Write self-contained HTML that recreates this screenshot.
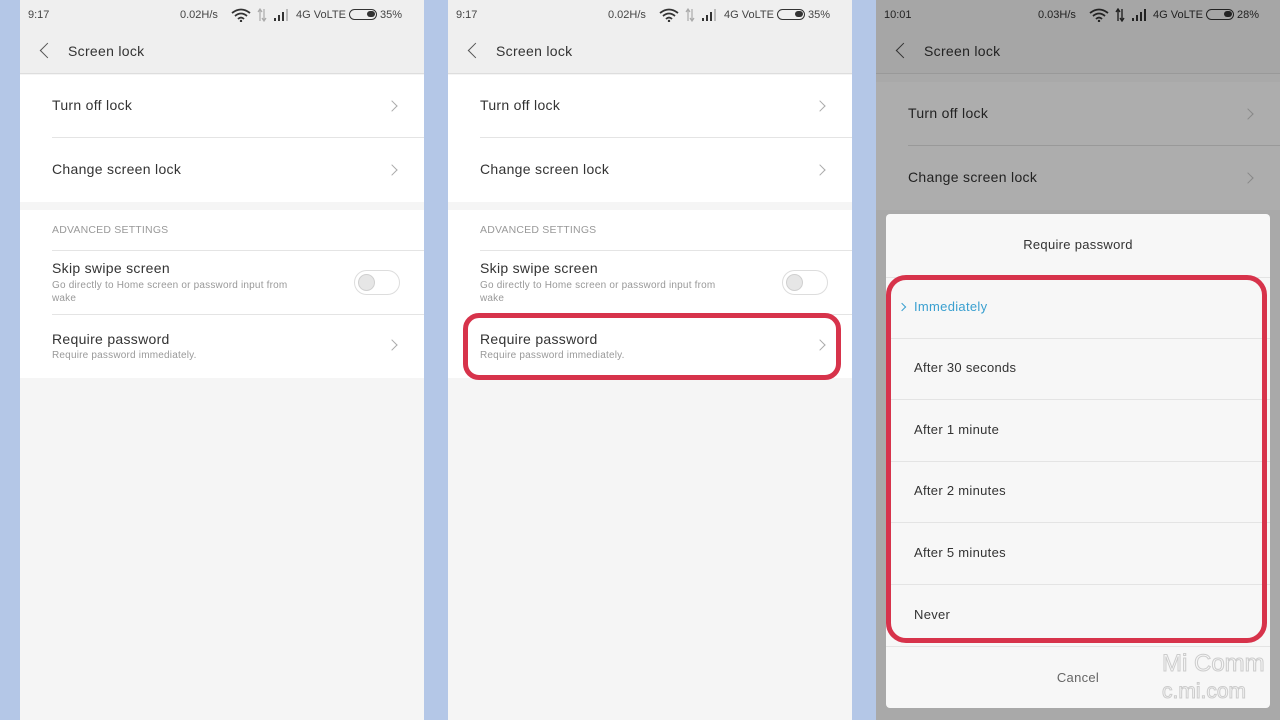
<!DOCTYPE html>
<html><head><meta charset="utf-8"><style>
*{margin:0;padding:0;box-sizing:border-box}
body{width:1280px;height:720px;background:#b4c7e7;position:relative;overflow:hidden;font-family:"Liberation Sans",sans-serif;color:#333}
.p{position:absolute;top:0;width:404px;height:720px;background:#f5f5f5;overflow:hidden}
.a{position:absolute}
.sb{top:0;left:0;right:0;height:30px;background:#efefef;font-size:11px;color:#444}
.hd{top:30px;left:0;right:0;height:44px;background:#efefef;border-bottom:1px solid #ddd}
.t{font-size:14px;color:#333;white-space:nowrap;letter-spacing:0.3px}
.s{font-size:10px;color:#999;white-space:nowrap;letter-spacing:0.2px}
.chev{width:8px;height:8px;border-top:1.3px solid #aaa;border-right:1.3px solid #aaa;transform:rotate(45deg)}
.div{height:1px;background:#e4e4e4}
.red{border:5px solid #d7334b;border-radius:16px}
.ic{position:absolute;top:8px}
</style></head><body>

<div class="p" style="left:20px">
 <div class="a sb"><span class="a" style="left:8px;top:9px">9:17</span><span class="a" style="left:160px;top:9px">0.02H/s</span>
  <svg class="ic" style="left:211px" width="20" height="14" viewBox="0 0 20 14"><path d="M1 5Q10-2 19 5M4 8Q10 3 16 8M7 11Q10 8 13 11" stroke="#333" stroke-width="1.8" fill="none"/><circle cx="10" cy="13" r="1.2" fill="#333"/></svg>
  <svg class="ic" style="left:236px" width="12" height="14" viewBox="0 0 12 14"><path d="M4 1v12M8 1v12M2 4l2-3 2 3M6 10l2 3 2-3" stroke="#aaa" stroke-width="1.2" fill="none"/></svg>
  <svg class="ic" style="left:253px" width="18" height="14" viewBox="0 0 18 14"><rect x="1" y="10" width="2" height="3" fill="#333"/><rect x="5" y="7" width="2" height="6" fill="#333"/><rect x="9" y="4" width="2" height="9" fill="#333"/><rect x="13" y="1" width="2" height="12" fill="#bbb"/></svg>
  <span class="a" style="left:276px;top:9px">4G VoLTE <span style="display:inline-block;width:28px;height:11px;border:1.5px solid #333;border-radius:6px;vertical-align:-2px;position:relative"><span style="position:absolute;right:1px;top:1px;width:8px;height:6px;background:#333;border-radius:3px"></span></span> 35%</span></div>
 <div class="a hd"><div class="a" style="left:22px;top:15px;width:11px;height:11px;border-left:1.5px solid #555;border-bottom:1.5px solid #555;transform:rotate(45deg)"></div><span class="a t" style="left:48px;top:13px">Screen lock</span></div>
 <div class="a" style="left:0;right:0;top:75px;height:127px;background:#fff"></div>
 <span class="a t" style="left:32px;top:97px">Turn off lock</span><div class="a chev" style="left:368px;top:102px"></div>
 <div class="a div" style="left:32px;right:0;top:137px"></div>
 <span class="a t" style="left:32px;top:161px">Change screen lock</span><div class="a chev" style="left:368px;top:166px"></div>
 <div class="a" style="left:0;right:0;top:210px;height:168px;background:#fff"></div>
 <span class="a s" style="left:32px;top:224px;font-size:10.5px">ADVANCED SETTINGS</span>
 <div class="a div" style="left:32px;right:0;top:250px"></div>
 <span class="a t" style="left:32px;top:260px">Skip swipe screen</span>
 <span class="a s" style="left:32px;top:279px;line-height:13px">Go directly to Home screen or password input from<br>wake</span>
 <div class="a" style="left:334px;top:270px;width:46px;height:25px;border:1px solid #ddd;border-radius:13px"><div class="a" style="left:3px;top:3px;width:17px;height:17px;border-radius:50%;background:#e6e6e6;border:1px solid #d0d0d0"></div></div>
 <div class="a div" style="left:32px;right:0;top:314px"></div>
 <span class="a t" style="left:32px;top:331px">Require password</span>
 <span class="a s" style="left:32px;top:350px">Require password immediately.</span><div class="a chev" style="left:368px;top:341px"></div>
</div>

<div class="p" style="left:448px">
 <div class="a sb"><span class="a" style="left:8px;top:9px">9:17</span><span class="a" style="left:160px;top:9px">0.02H/s</span>
  <svg class="ic" style="left:211px" width="20" height="14" viewBox="0 0 20 14"><path d="M1 5Q10-2 19 5M4 8Q10 3 16 8M7 11Q10 8 13 11" stroke="#333" stroke-width="1.8" fill="none"/><circle cx="10" cy="13" r="1.2" fill="#333"/></svg>
  <svg class="ic" style="left:236px" width="12" height="14" viewBox="0 0 12 14"><path d="M4 1v12M8 1v12M2 4l2-3 2 3M6 10l2 3 2-3" stroke="#aaa" stroke-width="1.2" fill="none"/></svg>
  <svg class="ic" style="left:253px" width="18" height="14" viewBox="0 0 18 14"><rect x="1" y="10" width="2" height="3" fill="#333"/><rect x="5" y="7" width="2" height="6" fill="#333"/><rect x="9" y="4" width="2" height="9" fill="#333"/><rect x="13" y="1" width="2" height="12" fill="#bbb"/></svg>
  <span class="a" style="left:276px;top:9px">4G VoLTE <span style="display:inline-block;width:28px;height:11px;border:1.5px solid #333;border-radius:6px;vertical-align:-2px;position:relative"><span style="position:absolute;right:1px;top:1px;width:8px;height:6px;background:#333;border-radius:3px"></span></span> 35%</span></div>
 <div class="a hd"><div class="a" style="left:22px;top:15px;width:11px;height:11px;border-left:1.5px solid #555;border-bottom:1.5px solid #555;transform:rotate(45deg)"></div><span class="a t" style="left:48px;top:13px">Screen lock</span></div>
 <div class="a" style="left:0;right:0;top:75px;height:127px;background:#fff"></div>
 <span class="a t" style="left:32px;top:97px">Turn off lock</span><div class="a chev" style="left:368px;top:102px"></div>
 <div class="a div" style="left:32px;right:0;top:137px"></div>
 <span class="a t" style="left:32px;top:161px">Change screen lock</span><div class="a chev" style="left:368px;top:166px"></div>
 <div class="a" style="left:0;right:0;top:210px;height:168px;background:#fff"></div>
 <span class="a s" style="left:32px;top:224px;font-size:10.5px">ADVANCED SETTINGS</span>
 <div class="a div" style="left:32px;right:0;top:250px"></div>
 <span class="a t" style="left:32px;top:260px">Skip swipe screen</span>
 <span class="a s" style="left:32px;top:279px;line-height:13px">Go directly to Home screen or password input from<br>wake</span>
 <div class="a" style="left:334px;top:270px;width:46px;height:25px;border:1px solid #ddd;border-radius:13px"><div class="a" style="left:3px;top:3px;width:17px;height:17px;border-radius:50%;background:#e6e6e6;border:1px solid #d0d0d0"></div></div>
 <div class="a div" style="left:32px;right:0;top:314px"></div>
 <span class="a t" style="left:32px;top:331px">Require password</span>
 <span class="a s" style="left:32px;top:350px">Require password immediately.</span><div class="a chev" style="left:368px;top:341px"></div>
 <div class="a red" style="left:15px;top:313px;width:378px;height:67px"></div>
</div>

<div class="p" style="left:876px;background:#a9a9a9">
 <div class="a sb" style="background:#a6a6a6;color:#222"><span class="a" style="left:8px;top:9px">10:01</span><span class="a" style="left:162px;top:9px">0.03H/s</span>
  <svg class="ic" style="left:213px" width="20" height="14" viewBox="0 0 20 14"><path d="M1 5Q10-2 19 5M4 8Q10 3 16 8M7 11Q10 8 13 11" stroke="#222" stroke-width="1.8" fill="none"/><circle cx="10" cy="13" r="1.2" fill="#222"/></svg>
  <svg class="ic" style="left:238px" width="12" height="14" viewBox="0 0 12 14"><path d="M4 1v12M8 1v12M2 4l2-3 2 3M6 10l2 3 2-3" stroke="#222" stroke-width="1.4" fill="none"/></svg>
  <svg class="ic" style="left:255px" width="18" height="14" viewBox="0 0 18 14"><rect x="1" y="10" width="2" height="3" fill="#222"/><rect x="5" y="7" width="2" height="6" fill="#222"/><rect x="9" y="4" width="2" height="9" fill="#222"/><rect x="13" y="1" width="2" height="12" fill="#222"/></svg>
  <span class="a" style="left:277px;top:9px">4G VoLTE <span style="display:inline-block;width:28px;height:11px;border:1.5px solid #222;border-radius:6px;vertical-align:-2px;position:relative"><span style="position:absolute;right:1px;top:1px;width:8px;height:6px;background:#222;border-radius:3px"></span></span> 28%</span></div>
 <div class="a hd" style="background:#a6a6a6;border-color:#999"><div class="a" style="left:22px;top:15px;width:11px;height:11px;border-left:1.5px solid #333;border-bottom:1.5px solid #333;transform:rotate(45deg)"></div><span class="a t" style="left:48px;top:13px;color:#222">Screen lock</span></div>
 <div class="a" style="left:0;right:0;top:82px;height:128px;background:#adadad"></div>
 <span class="a t" style="left:32px;top:105px;color:#222">Turn off lock</span><div class="a chev" style="left:368px;top:110px;border-color:#888"></div>
 <div class="a div" style="left:32px;right:0;top:145px;background:#999"></div>
 <span class="a t" style="left:32px;top:169px;color:#222">Change screen lock</span><div class="a chev" style="left:368px;top:174px;border-color:#888"></div>
 <div class="a" style="left:10px;top:214px;width:384px;height:494px;background:#f7f7f7;border-radius:4px">
  <span class="a t" style="left:0;right:0;top:23px;text-align:center;font-size:13px">Require password</span>
  <div class="a div" style="left:0;right:0;top:63px"></div>
  <div class="a" style="left:13px;top:90px;width:6px;height:6px;border-top:1.5px solid #3aa0d0;border-right:1.5px solid #3aa0d0;transform:rotate(45deg)"></div>
  <span class="a t" style="left:28px;top:85px;color:#3aa0d0;font-size:13px">Immediately</span>
  <div class="a div" style="left:0;right:0;top:124px"></div>
  <span class="a t" style="left:28px;top:146px;font-size:13px">After 30 seconds</span>
  <div class="a div" style="left:0;right:0;top:185px"></div>
  <span class="a t" style="left:28px;top:208px;font-size:13px">After 1 minute</span>
  <div class="a div" style="left:0;right:0;top:247px"></div>
  <span class="a t" style="left:28px;top:269px;font-size:13px">After 2 minutes</span>
  <div class="a div" style="left:0;right:0;top:308px"></div>
  <span class="a t" style="left:28px;top:331px;font-size:13px">After 5 minutes</span>
  <div class="a div" style="left:0;right:0;top:370px"></div>
  <span class="a t" style="left:28px;top:393px;font-size:13px">Never</span>
  <div class="a div" style="left:0;right:0;top:432px"></div>
  <span class="a t" style="left:0;right:0;top:456px;text-align:center;font-size:13px;color:#666">Cancel</span>
  <span class="a" style="left:276px;top:436px;font-size:24px;color:transparent;-webkit-text-stroke:1px #ccc;font-family:'Liberation Sans Narrow','Liberation Sans',sans-serif;white-space:nowrap">Mi Comm</span>
  <span class="a" style="left:276px;top:466px;font-size:21px;color:transparent;-webkit-text-stroke:1px #ccc;white-space:nowrap">c.mi.com</span>
 </div>
 <div class="a red" style="left:10px;top:275px;width:381px;height:368px;border-radius:20px"></div>
</div>
</body></html>
